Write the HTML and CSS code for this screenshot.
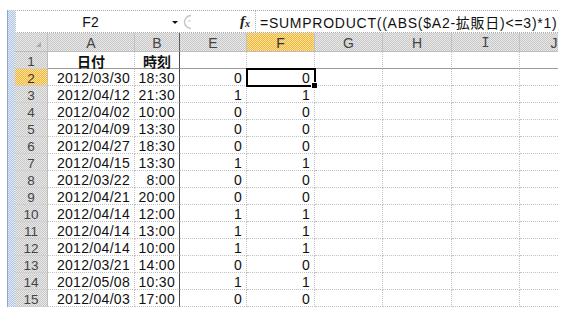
FILE: index.html
```html
<!DOCTYPE html>
<html lang="ja">
<head>
<meta charset="utf-8">
<title>SUMPRODUCT</title>
<link rel="stylesheet" href="styles.css">
</head>
<body>
<div class="app">
  <div class="strip"></div>
  <div class="main">
    <div class="fbar">
      <div class="namebox">F2</div>
      <div class="dd"><span class="tri"></span></div>
      <div class="cancel">
        <svg width="16" height="16" viewBox="0 0 16 16"><path d="M9 1.5 A6.5 6.5 0 1 0 9 14.5" fill="none" stroke="#c4c4c4" stroke-width="1.4"/><path d="M6 7 L9 7" stroke="#d4d4d4" stroke-width="1.2"/></svg>
      </div>
      <div class="fx"><i>f</i><span>x</span></div>
      <div class="formula">=SUMPRODUCT((ABS($A2-拡販日)&lt;=3)*1)</div>
    </div>
    <div class="sheet">
      <div class="ch corner"><span class="ctri"></span></div><div class="ch">A</div><div class="ch fz">B</div><div class="ch">E</div><div class="ch hl">F</div><div class="ch">G</div><div class="ch">H</div><div class="ch serif">I</div><div class="ch last"><span class="clip">J</span></div>

      <div class="rh r1">1</div><div class="c r1 hd">日付</div><div class="c r1 fz hd">時刻</div><div class="c r1"></div><div class="c r1"></div><div class="c r1"></div><div class="c r1"></div><div class="c r1"></div><div class="c r1 last"></div>

      <div class="rh hl">2</div><div class="c n">2012/03/30</div><div class="c n fz">18:30</div><div class="c n">0</div><div class="c n sel">0<span class="handle"></span></div><div class="c"></div><div class="c"></div><div class="c"></div><div class="c last"></div>
      <div class="rh">3</div><div class="c n">2012/04/12</div><div class="c n fz">21:30</div><div class="c n">1</div><div class="c n">1</div><div class="c"></div><div class="c"></div><div class="c"></div><div class="c last"></div>
      <div class="rh">4</div><div class="c n">2012/04/02</div><div class="c n fz">10:00</div><div class="c n">0</div><div class="c n">0</div><div class="c"></div><div class="c"></div><div class="c"></div><div class="c last"></div>
      <div class="rh">5</div><div class="c n">2012/04/09</div><div class="c n fz">13:30</div><div class="c n">0</div><div class="c n">0</div><div class="c"></div><div class="c"></div><div class="c"></div><div class="c last"></div>
      <div class="rh">6</div><div class="c n">2012/04/27</div><div class="c n fz">18:30</div><div class="c n">0</div><div class="c n">0</div><div class="c"></div><div class="c"></div><div class="c"></div><div class="c last"></div>
      <div class="rh">7</div><div class="c n">2012/04/15</div><div class="c n fz">13:30</div><div class="c n">1</div><div class="c n">1</div><div class="c"></div><div class="c"></div><div class="c"></div><div class="c last"></div>
      <div class="rh">8</div><div class="c n">2012/03/22</div><div class="c n fz">8:00</div><div class="c n">0</div><div class="c n">0</div><div class="c"></div><div class="c"></div><div class="c"></div><div class="c last"></div>
      <div class="rh">9</div><div class="c n">2012/04/21</div><div class="c n fz">20:00</div><div class="c n">0</div><div class="c n">0</div><div class="c"></div><div class="c"></div><div class="c"></div><div class="c last"></div>
      <div class="rh">10</div><div class="c n">2012/04/14</div><div class="c n fz">12:00</div><div class="c n">1</div><div class="c n">1</div><div class="c"></div><div class="c"></div><div class="c"></div><div class="c last"></div>
      <div class="rh">11</div><div class="c n">2012/04/14</div><div class="c n fz">13:00</div><div class="c n">1</div><div class="c n">1</div><div class="c"></div><div class="c"></div><div class="c"></div><div class="c last"></div>
      <div class="rh">12</div><div class="c n">2012/04/14</div><div class="c n fz">10:00</div><div class="c n">1</div><div class="c n">1</div><div class="c"></div><div class="c"></div><div class="c"></div><div class="c last"></div>
      <div class="rh">13</div><div class="c n">2012/03/21</div><div class="c n fz">14:00</div><div class="c n">0</div><div class="c n">0</div><div class="c"></div><div class="c"></div><div class="c"></div><div class="c last"></div>
      <div class="rh">14</div><div class="c n">2012/05/08</div><div class="c n fz">10:30</div><div class="c n">1</div><div class="c n">1</div><div class="c"></div><div class="c"></div><div class="c"></div><div class="c last"></div>
      <div class="rh">15</div><div class="c n">2012/04/03</div><div class="c n fz">17:00</div><div class="c n">0</div><div class="c n">0</div><div class="c"></div><div class="c"></div><div class="c"></div><div class="c last"></div>
    </div>
  </div>
</div>
</body>
</html>
```
FILE: styles.css
```css
* { box-sizing: border-box; }
html, body { margin: 0; padding: 0; background: #fff; }
body {
  width: 567px;
  height: 314px;
  overflow: hidden;
  font-family: "Liberation Sans", "Noto Sans CJK JP", sans-serif;
  font-size: 14px;
  color: #111;
}
.app {
  display: flex;
  padding: 10px 0 0 7px;
}
.strip {
  width: 8px;
  height: 297px;
  border-left: 1px solid #8ea8cf;
  background-color: #c9d8ee;
  background-image: conic-gradient(#b3c7e5 25%, #e0e9f6 0 50%, #b3c7e5 0 75%, #e0e9f6 0);
  background-size: 2px 2px;
}
.main {
  width: 543px;
  display: flex;
  flex-direction: column;
}
/* formula bar */
.fbar {
  height: 23px;
  display: flex;
  align-items: stretch;
  border-top: 1px dotted #a9a9a9;
  border-bottom: 1px dotted #a9a9a9;
  border-left: 1px dotted #b5b5b5;
}
.namebox {
  width: 149px;
  display: flex;
  align-items: center;
  justify-content: center;
  padding-top: 1px;
}
.dd {
  width: 17px;
  display: flex;
  align-items: center;
  padding-left: 7px;
  padding-top: 1px;
}
.tri {
  width: 0;
  height: 0;
  border-left: 3px solid transparent;
  border-right: 3px solid transparent;
  border-top: 3px solid #111;
}
.cancel {
  width: 56px;
  display: flex;
  align-items: center;
}
.fx {
  width: 17px;
  display: flex;
  align-items: center;
  font-family: "Liberation Serif", serif;
  font-weight: bold;
  font-size: 15px;
  color: #222;
  padding-left: 2px;
}
.fx i { font-style: italic; }
.fx span { font-size: 10px; font-style: italic; margin-top: 4px; margin-left: 0; }
.formula {
  flex: 1;
  display: flex;
  align-items: center;
  border-left: 1px dotted #b5b5b5;
  padding-left: 4px;
  padding-top: 1px;
  white-space: nowrap;
  overflow: hidden;
  letter-spacing: 0.75px;
}
/* sheet */
.sheet {
  display: grid;
  grid-template-columns: 33px 87px 45px 67px 68px 68px 69px 68px 38px;
  grid-template-rows: 19px repeat(15, 17px);
}
.ch, .rh {
  background-color: #d8d8d8;
  background-image: conic-gradient(#c8c8c8 25%, #e8e8e8 0 50%, #c8c8c8 0 75%, #e8e8e8 0);
  background-size: 2px 2px;
  color: #444;
  font-size: 14px;
  display: flex;
  align-items: center;
  justify-content: center;
}
.ch {
  border-right: 1px solid #c2c2c2;
  border-bottom: 1px solid #bdbdbd;
  padding-top: 1px;
}
.ch.serif { font-family: "Liberation Mono", monospace; }
.ch.fz { border-right: 1px solid #5e5e5e; }
.ch.last { border-right: none; justify-content: flex-start; overflow: hidden; }
.clip { display: block; width: 68px; flex: 0 0 68px; text-align: center; }
.corner { position: relative; }
.ctri {
  position: absolute;
  right: 6px;
  bottom: 4px;
  width: 0;
  height: 0;
  border-left: 5px solid transparent;
  border-bottom: 5px solid #a8a8a8;
}
.rh {
  border-right: 1px solid #bdbdbd;
  border-bottom: 1px solid #cfcfcf;
  padding-top: 2px;
  font-size: 13.5px;
}
.hl {
  background-color: #f8cc60;
  background-image: conic-gradient(#f2b43a 25%, #fde49a 0 50%, #f2b43a 0 75%, #fde49a 0);
  color: #333;
}
.c {
  border-right: 1px dotted #bfc2c9;
  border-bottom: 1px dotted #bfc2c9;
  display: flex;
  align-items: center;
  padding-top: 2px;
  white-space: nowrap;
}
.c.last { border-right: none; }
.c.fz { border-right: 1px solid #4a4a4a; }
.c.r1 { border-bottom: 1px solid #9b9b9b; }
.c.hd {
  justify-content: center;
  font-family: "Noto Sans CJK JP", sans-serif;
  font-weight: bold;
  font-size: 14px;
  line-height: 16px;
}
.n {
  justify-content: flex-end;
  padding-right: 4px;
  letter-spacing: 0.3px;
}
.sel {
  position: relative;
  outline: 2px solid #000;
  outline-offset: -1px;
}
.handle {
  position: absolute;
  right: -3px;
  bottom: -3px;
  width: 5px;
  height: 5px;
  background: #000;
  outline: 1px solid #fff;
}
```
